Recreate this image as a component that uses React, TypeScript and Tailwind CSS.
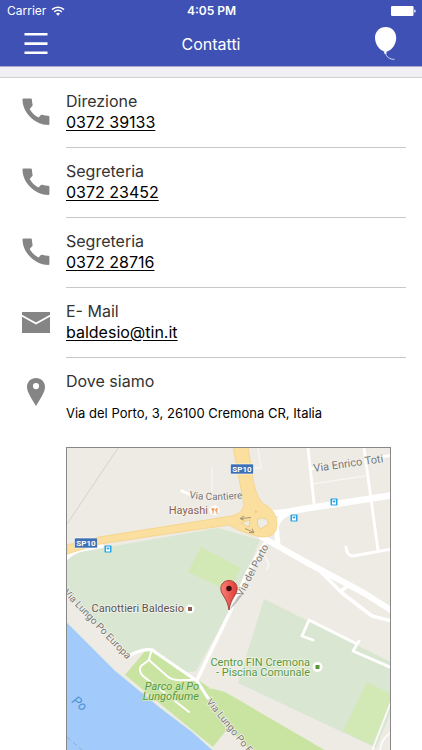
import type { ReactNode } from "react";

function WifiIcon() {
  return (
    <svg viewBox="0 0 14 10" className="h-[10px] w-[14px]" fill="none" stroke="white" strokeWidth="1.5" aria-hidden="true">
      <path d="M1 3.6a8.6 8.6 0 0 1 12 0" />
      <path d="M3.2 5.9a5.4 5.4 0 0 1 7.6 0" />
      <path d="M5 7.7a2.9 2.9 0 0 1 4 0L7 9.8z" fill="white" stroke="none" />
    </svg>
  );
}

function BatteryIcon() {
  return (
    <svg viewBox="0 0 25 10" className="h-[10px] w-[25px]" fill="white" aria-hidden="true">
      <rect x="0" y="0" width="22.5" height="10" rx="1.2" />
      <path d="M23.3 3.2q1.4.4 1.4 1.8t-1.4 1.8z" />
    </svg>
  );
}

function BalloonIcon() {
  return (
    <svg viewBox="0 0 24 34" className="h-[34px] w-[24px]" aria-hidden="true">
      <path d="M11.7 0C5.600 0 1 4.700 1 10.800c0 6.200 4.300 12.200 9.500 13.900l-.7 1.800h3l-.5-1.700c5.600-1.400 9.900-7.500 9.900-14C22.200 4.700 17.800 0 11.700 0z" fill="white" />
      <path d="M11.500 26c.6 3.800 4 6.300 9 6.400" fill="none" stroke="white" strokeOpacity=".75" strokeWidth="1" />
    </svg>
  );
}

function PhoneIcon() {
  return (
    <svg viewBox="0 0 36 36" className="h-9 w-9" fill="#858585" aria-hidden="true">
      <path d="M5.500 4.500h7.300q1 0 1.100 1c.1 2 .3 3.600.7 5.200q.2.700-.3 1.200l-2.600 3c1.800 3.300 5.200 6.800 8.900 8.700l2.300-2.500q.6-.6 1.300-.4c1.800.5 4 .9 6 1q1.200.1 1.200 1.100v7.200q0 1-1 1C17.500 31 4.500 19 4.500 5.500q0-1 1-1z" />
    </svg>
  );
}

function MailIcon() {
  return (
    <svg viewBox="0 0 36 36" className="h-9 w-9" fill="#858585" aria-hidden="true">
      <path d="M4 8h28v2.800L18 18.500 4 10.800z" />
      <path d="M4 12.700l14 7.800 14-7.800V29H4z" />
    </svg>
  );
}

function PlaceIcon() {
  return (
    <svg viewBox="0 0 36 36" className="h-9 w-9" fill="#858585" aria-hidden="true">
      <path fillRule="evenodd" d="M18 4c-5.200 0-9 4-9 8.900C9 18.500 14.500 25.500 18 32c3.500-6.500 9-13.500 9-19.100C27 8 23.200 4 18 4zm0 5a3.100 3.100 0 1 1 0 6.200A3.100 3.100 0 0 1 18 9z" />
    </svg>
  );
}

function Bus({ x, y }: { x: number; y: number }) {
  return (
    <g transform={`translate(${x} ${y})`}>
      <rect x="-3.500" y="-3.500" width="7" height="7" rx=".7" fill="#27a3e8" />
      <path d="M-2 2.500v-4.300q0-.7.700-.7h2.600q.7 0 .7.700v4.300z" fill="white" />
      <rect x="-1.300" y="-1.400" width="2.600" height="1.700" fill="#27a3e8" />
    </g>
  );
}

function RoadBadge({ x, y }: { x: number; y: number }) {
  return (
    <g>
      <rect x={x - 11.5} y={y - 5} width="23" height="10" rx="1" fill="#3f6fb5" stroke="white" strokeWidth=".6" />
      <text x={x} y={y + 3} textAnchor="middle" fontSize="8" fontWeight="700" fill="white">SP10</text>
    </g>
  );
}

function StreetMap() {
  return (
    <svg
      viewBox="67 448 323 323"
      preserveAspectRatio="xMidYMin slice"
      role="img"
      aria-label="Mappa di Via del Porto, Cremona"
      className="block h-full w-full font-['Roboto',sans-serif]"
    >
      <defs>
        <linearGradient id="pin" x1="0" x2="1">
          <stop offset="0" stopColor="#f98178" />
          <stop offset="1" stopColor="#df3b34" />
        </linearGradient>
        <path id="cantiere" d="M189 498Q213 502 246 498" />
        <path id="europa" d="M63 593L130 663" />
        <path id="europa2" d="M206 702L258 766" />
      </defs>
      <rect x="60" y="440" width="340" height="340" fill="#eeebe4" />
      <path d="M118 448L67 524" stroke="#d5d2cd" />

      <path d="M67 560L80 552 218 528 260 540 232 606 196 671 183 673 153 648 142 649 127 655 67 594z" fill="#d9e6d1" />
      <path d="M201 547l40 21-12 23-41-19z" fill="#d2e8b5" />
      <path d="M264 599l127 63v50l-15 36-138-65z" fill="#d9e6d1" />
      <path d="M367 682l24 12v6l-19 45-29-14z" fill="#d2e8b5" />

      <path d="M67 622l48 48 45 37 33 25 28 25v25H67z" fill="#a2cbfc" />
      <path d="M146 650l-21 25 88 72 15-19 24 24h76L225 692l-15-4-58-38z" fill="#c9e3a0" />
      <path d="M67 622l48 48 45 37 33 25 20 18" fill="none" stroke="#e7ecdf" strokeWidth="1.200" />
      <path d="M67 737l16 14" stroke="#9aaec3" strokeDasharray="5 3" />

      <g fill="none" stroke="white" strokeLinecap="round" strokeLinejoin="round">
        <path d="M312 484l53-8M212 468v22M258 448l3 20h-12" strokeWidth="1.500" strokeOpacity=".5" />
        <path d="M182 491l9 4M238 495l8-1" strokeWidth="3" />
        <path d="M67 558q5-6 14-8l21-4" strokeWidth="3.500" />
        <path d="M308 448l6 55M364 448l14 102M310 469l16-3M381 457l11-2M346 547q1 9 7 9l39-7" strokeWidth="2.800" />
        <path d="M268 513q12 1 35-4l91-14" strokeWidth="6.500" />
        <path d="M276 526q4-11 16-14M276 525l2 20" strokeWidth="5" />
        <path d="M262 537l42 24 60 32 30 19" strokeWidth="6" />
        <path d="M320 571l22 22 30 23 20 5M341 591l9-7" strokeWidth="3.500" />
        <path d="M265 543l-18 30-17 39-33 68" strokeWidth="3.500" />
        <path d="M265 556l4 10-2 3" strokeWidth="2" strokeOpacity=".5" />
        <path d="M127 657q15-9 25-7l45 31 11 17" strokeWidth="3.200" />
        <path d="M151 652l-2 8 18 16q5 5 18 4h12M149 660l-8 6q-3 5 2 10l46 36" strokeWidth="2" />
        <path d="M210 688q12-3 21 5l96 57" stroke="#eeece1" strokeWidth="1.500" />
        <path d="M313 640l-11-4 7-16 46 23M359 641l-6 10 39 17" strokeWidth="2.800" />
        <path d="M392 699q-10 26-20 52M393 731q-12 7-13 20" strokeWidth="1.800" strokeOpacity=".8" />
      </g>

      <path
        d="M233 447h15l4 25q2 20 10 31 15 7 15 21t-15 13q-18-3-33-12l-69 10-60 9-33 10v-9l32-8 126-20q17-1 19-12z"
        fill="#fbdf9f"
        stroke="#f5d087"
        strokeWidth=".8"
      />
      <path d="M257.500 519q6-2 9 0 2 3 1.500 5.500l-7.500 4.500-3-4zM241 523l9-3-1 7z" fill="#eeebe4" stroke="#ecc878" strokeWidth=".7" strokeLinejoin="round" />
      <path d="M255 510l3 2-3 1z" fill="#efc879" />
      <path d="M251 517.500l-10 1m3-2.500l-4 2.600 4 1.600M245 528.500l9 4m-5 0l5 .2-2-4" fill="none" stroke="#a59475" strokeWidth="1" />

      <RoadBadge x={242} y={469} />
      <RoadBadge x={86} y={543} />
      <Bus x={108} y={549} />
      <Bus x={334} y={502} />
      <Bus x={294} y={518} />

      <g fontSize="10" fill="#777777" stroke="#f4f2ed" strokeWidth="1.500" paintOrder="stroke">
        <text><textPath href="#cantiere">Via Cantiere</textPath></text>
        <text fontSize="11" transform="translate(314 472) rotate(-8)">Via Enrico Toti</text>
        <text transform="translate(242 597) rotate(-62)">Via del Porto</text>
        <text><textPath href="#europa">Via Lungo Po Europa</textPath></text>
        <text><textPath href="#europa2">Via Lungo Po Europa</textPath></text>
      </g>
      <text fontSize="13" fontStyle="italic" fill="#4f8fd0" transform="translate(71 702) rotate(40)">Po</text>

      <g strokeWidth="1.500" stroke="#f4f4ec" paintOrder="stroke">
        <text x="208" y="514" fontSize="11" textAnchor="end" fill="#8c5f56">Hayashi</text>
        <text x="184" y="612" fontSize="11" textAnchor="end" fill="#5b5450">Canottieri Baldesio</text>
        <g fontSize="11" fill="#55993c">
          <text x="310" y="666" textAnchor="end">Centro FIN Cremona</text>
          <text x="310" y="676" textAnchor="end">- Piscina Comunale</text>
          <text x="199" y="690" textAnchor="end" fontStyle="italic" stroke="#d5e8b5">Parco al Po</text>
          <text x="199" y="700" textAnchor="end" fontStyle="italic" stroke="#d5e8b5">Lungofiume</text>
        </g>
      </g>
      <circle cx="214.500" cy="510.500" r="5" fill="white" />
      <path d="M212 508v2q1 1 2 0v-2M213 508v6M217 514v-6q-1.500 1-1.300 3H217" fill="none" stroke="#ee8d3a" strokeWidth=".9" />
      <circle cx="190" cy="609" r="4.500" fill="white" />
      <rect x="188" y="607" width="4" height="4" fill="#8c5f56" />
      <circle cx="317.500" cy="667" r="5" fill="white" />
      <rect x="315.500" y="665" width="4" height="4" fill="#55993c" />

      <path d="M229 610l9-14 5-2-9 12z" fill="#555555" fillOpacity=".35" />
      <path d="M229 580.500c-4.800 0-8.200 3.600-8.200 8 0 6.500 6.700 9.500 8.200 21.500 1.500-12 8.200-15 8.200-21.500 0-4.400-3.400-8-8.200-8z" fill="url(#pin)" stroke="#a33a35" strokeWidth=".9" />
      <circle cx="229" cy="588.500" r="2.700" fill="#3b0c0b" />
    </svg>
  );
}

function ContactRow({ icon, label, href, value }: { icon: ReactNode; label: string; href: string; value: string }) {
  return (
    <li className="grid grid-cols-[66px_1fr]">
      <span className="pt-4 pl-[18px]">{icon}</span>
      <div className="mr-4 h-[70px] border-b border-[#c8c8c8] pt-[13px] text-base leading-[21px]">
        <p className="text-[#333333]">{label}</p>
        <a href={href} className="text-black underline underline-offset-2">{value}</a>
      </div>
    </li>
  );
}

export default function App() {
  return (
    <div className="flex h-screen flex-col bg-white font-['Inter',sans-serif]">
      <header className="bg-[#3f51b5] text-white">
        <div className="grid h-[22px] grid-cols-3 items-center pr-[6px] pl-[7px] text-xs">
          <span className="flex items-center gap-[5px]">
            Carrier <WifiIcon />
          </span>
          <span className="text-center font-semibold">4:05 PM</span>
          <span className="flex justify-end">
            <BatteryIcon />
          </span>
        </div>
        <div className="grid h-11 grid-cols-[72px_1fr_72px] items-center">
          <button type="button" aria-label="Menu" className="flex h-11 items-center justify-center">
            <svg viewBox="0 0 24 22" className="h-[22px] w-[24px]" fill="white" aria-hidden="true">
              <path d="M.5 0h23v2.600H.5zM.5 9.300h23v2.600H.5zM.5 18.500h23v2.600H.5z" />
            </svg>
          </button>
          <h1 className="text-center text-base">Contatti</h1>
          <button type="button" aria-label="Palloncino" className="flex h-11 items-center justify-center">
            <BalloonIcon />
          </button>
        </div>
      </header>
      <div className="h-3 shrink-0 border-y border-t-[#a9a9cf] border-b-[#d0d0d0] bg-[#efeff4]" />
      <main className="min-h-0 flex-1 overflow-y-auto [scrollbar-width:none]">
        <ul>
          <ContactRow icon={<PhoneIcon />} label="Direzione" href="tel:037239133" value="0372 39133" />
          <ContactRow icon={<PhoneIcon />} label="Segreteria" href="tel:037223452" value="0372 23452" />
          <ContactRow icon={<PhoneIcon />} label="Segreteria" href="tel:037228716" value="0372 28716" />
          <ContactRow icon={<MailIcon />} label="E- Mail" href="mailto:baldesio@tin.it" value="baldesio@tin.it" />
          <li className="grid grid-cols-[66px_1fr]">
            <span className="pt-4 pl-[18px]">
              <PlaceIcon />
            </span>
            <div className="mr-[31px] pt-[13px]">
              <p className="text-base leading-[21px] text-[#333333]">Dove siamo</p>
              <p className="mt-3 text-[13px] leading-[18px] text-black">Via del Porto, 3, 26100 Cremona CR, Italia</p>
              <div className="mt-[25px] aspect-square border border-[#888888]">
                <StreetMap />
              </div>
            </div>
          </li>
        </ul>
      </main>
    </div>
  );
}
